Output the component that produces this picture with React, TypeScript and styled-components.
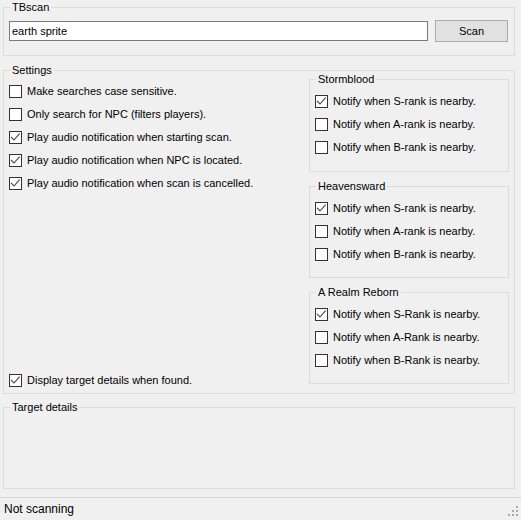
import React from 'react';
import styled, { createGlobalStyle } from 'styled-components';

const GlobalStyle = createGlobalStyle`
    html, body {
        margin: 0;
        padding: 0;
        background: #f0f0f0;
    }
    body {
        font-family: "Liberation Sans", Arial, sans-serif;
        font-size: 11px;
        color: #000;
    }
`;

const Window = styled.div`
    width: 521px;
    height: 520px;
    display: flex;
    flex-direction: column;
    background: #f0f0f0;
    overflow: hidden;
`;

const Main = styled.div`
    flex: 1;
    display: flex;
    flex-direction: column;
    padding: 7px 6px 0 3px;
`;

const GroupBox: any = styled.div<{ $h?: number; $mt?: number }>`
    position: relative;
    box-sizing: border-box;
    border: 1px solid #dcdcdc;
    height: ${(props) => (props.$h ? `${props.$h}px` : 'auto')};
    margin-top: ${(props) => props.$mt || 0}px;
    flex-shrink: 0;
`;

// caption sits on top of the group's border line
const Caption = styled.span`
    position: absolute;
    top: -7px;
    left: 6px;
    padding: 0 2px;
    line-height: 13px;
    background: #f0f0f0;
    white-space: nowrap;
`;

const SearchRow = styled.div`
    display: flex;
    align-items: center;
    gap: 7px;
    padding: 12px 6px 13px 5px;
`;

const SearchInput = styled.input`
    width: 419px;
    height: 20px;
    box-sizing: border-box;
    margin: 0;
    padding: 0 2px;
    border: 1px solid #7a7a7a;
    background: #fff;
    color: #000;
    font-family: "Liberation Sans", Arial, sans-serif;
    font-size: 11px;
    outline: none;
`;

const ScanButton = styled.button`
    width: 73px;
    height: 22px;
    box-sizing: border-box;
    margin: 0;
    padding: 0;
    border: 1px solid #adadad;
    background: #e1e1e1;
    color: #000;
    font-family: "Liberation Sans", Arial, sans-serif;
    font-size: 11px;
`;

const SettingsBody = styled.div`
    display: flex;
    height: 100%;
    box-sizing: border-box;
    padding: 0 5px;
`;

const LeftColumn = styled.div`
    flex: 1;
    display: flex;
    flex-direction: column;
    gap: 10px;
    padding: 14px 0 6px;
`;

const RightColumn = styled.div`
    width: 200px;
    display: flex;
    flex-direction: column;
    gap: 14px;
    padding-top: 8px;
`;

const RankList = styled.div`
    display: flex;
    flex-direction: column;
    gap: 10px;
    padding: 15px 5px 0;
`;

const Option: any = styled.label<{ $bottom?: boolean }>`
    display: flex;
    align-items: center;
    height: 13px;
    line-height: 13px;
    white-space: nowrap;
    cursor: default;
    margin-top: ${(props) => (props.$bottom ? 'auto' : '0')};
`;

const Box = styled.span`
    display: flex;
    align-items: center;
    justify-content: center;
    width: 13px;
    height: 13px;
    box-sizing: border-box;
    border: 1px solid #333;
    background: #fff;
    margin-right: 5px;
    flex-shrink: 0;
`;

const StatusBar = styled.div`
    height: 23px;
    box-sizing: border-box;
    border-top: 1px solid #d7d7d7;
    display: flex;
    padding-left: 4px;
    font-size: 12px;
    line-height: 22px;
`;

const Grip = styled.svg`
    margin-left: auto;
    align-self: flex-end;
    margin-right: 3px;
    margin-bottom: 3px;
`;

function CheckOption({ label, checked, bottom }: { label: string; checked?: boolean; bottom?: boolean }) {
    return (
        <Option $bottom={bottom}>
            <Box>
                {checked && (
                    <svg width="11" height="11" viewBox="0 0 11 11">
                        <polyline
                            points="1,4.8 4,8 9.6,1.6"
                            fill="none"
                            stroke="#444"
                            strokeWidth="1.1"
                        />
                    </svg>
                )}
            </Box>
            {label}
        </Option>
    );
}

const settings = [
    { label: 'Make searches case sensitive.', checked: false },
    { label: 'Only search for NPC (filters players).', checked: false },
    { label: 'Play audio notification when starting scan.', checked: true },
    { label: 'Play audio notification when NPC is located.', checked: true },
    { label: 'Play audio notification when scan is cancelled.', checked: true },
];

const expansions = [
    { name: 'Stormblood', rank: 'rank', height: 93 },
    { name: 'Heavensward', rank: 'rank', height: 92 },
    { name: 'A Realm Reborn', rank: 'Rank', height: 92 },
];

export default function App() {
    return (
        <>
            <GlobalStyle />
            <Window>
                <Main>
                    <GroupBox>
                        <Caption>TBscan</Caption>
                        <SearchRow>
                            <SearchInput defaultValue="earth sprite" />
                            <ScanButton>Scan</ScanButton>
                        </SearchRow>
                    </GroupBox>

                    <GroupBox $h={324} $mt={14}>
                        <Caption>Settings</Caption>
                        <SettingsBody>
                            <LeftColumn>
                                {settings.map((s) => (
                                    <CheckOption key={s.label} label={s.label} checked={s.checked} />
                                ))}
                                <CheckOption label="Display target details when found." checked bottom />
                            </LeftColumn>
                            <RightColumn>
                                {expansions.map((exp) => (
                                    <GroupBox key={exp.name} $h={exp.height}>
                                        <Caption>{exp.name}</Caption>
                                        <RankList>
                                            {['S', 'A', 'B'].map((r) => (
                                                <CheckOption
                                                    key={r}
                                                    label={`Notify when ${r}-${exp.rank} is nearby.`}
                                                    checked={r === 'S'}
                                                />
                                            ))}
                                        </RankList>
                                    </GroupBox>
                                ))}
                            </RightColumn>
                        </SettingsBody>
                    </GroupBox>

                    <GroupBox $h={82} $mt={13}>
                        <Caption>Target details</Caption>
                    </GroupBox>
                </Main>
                <StatusBar>
                    Not scanning
                    <Grip width="12" height="12" viewBox="0 0 12 12">
                        {[
                            [10, 1],
                            [6, 5],
                            [10, 5],
                            [2, 9],
                            [6, 9],
                            [10, 9],
                        ].map(([x, y]) => (
                            <rect key={`${x}-${y}`} x={x} y={y} width="2" height="2" fill="#a8a8a8" />
                        ))}
                    </Grip>
                </StatusBar>
            </Window>
        </>
    );
}
